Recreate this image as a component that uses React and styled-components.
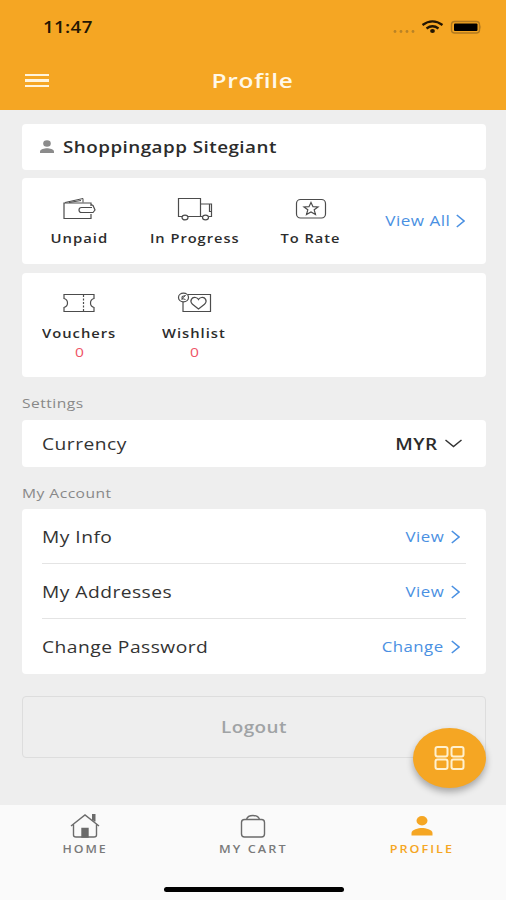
import React from 'react';
import styled, { createGlobalStyle } from 'styled-components';

const ORANGE = '#f5a623';

const GlobalStyle = createGlobalStyle`
  * { box-sizing: border-box; }
  body { margin: 0; background: #eeeeee; font-family: "Open Sans", "Noto Sans", sans-serif; }
  button { font: inherit; border: 0; background: none; padding: 0; margin: 0; }
`;

const Screen = styled.div`
  width: 506px;
  height: 900px;
  display: flex;
  flex-direction: column;
  background: #eeeeee;
  overflow: hidden;
`;

const Label = styled.span`
  display: inline-block;
  white-space: nowrap;
  font-size: ${(p) => p.$size}px;
  line-height: ${(p) => p.$line || 20}px;
  font-weight: ${(p) => p.$weight || 400};
  color: ${(p) => p.$color || '#333'};
  letter-spacing: ${(p) => p.$spacing ?? 0.4}px;
  transform: scaleX(${(p) => p.$stretch || 1.2});
  transform-origin: ${(p) => p.$origin || 'left'} center;
`;

const Header = styled.header`
  height: 110px;
  flex: none;
  background: ${ORANGE};
`;

const StatusBar = styled.div`
  height: 53px;
  padding: 0 24px 0 43px;
  display: flex;
  align-items: center;
  justify-content: space-between;
`;

const StatusIcons = styled.svg`
  width: 92px;
  height: 16px;
  display: block;
`;

const TitleBar = styled.div`
  height: 55px;
  display: grid;
  grid-template-columns: 61px 1fr 61px;
  align-items: center;
  text-align: center;
`;

const MenuButton = styled.button`
  display: grid;
  gap: 3px;
  padding: 0 12px 0 25px;
`;

const MenuLine = styled.i`
  display: block;
  height: 2.5px;
  background: #fff4dc;
`;

const Content = styled.main`
  flex: 1;
  padding: 14px 20px 0 22px;
`;

const Card = styled.section`
  height: ${(p) => p.$height}px;
  margin-bottom: ${(p) => p.$gap || 0}px;
  background: #fff;
  border-radius: 4px;
  display: flex;
`;

const NameCard = styled(Card)`
  align-items: center;
  padding-left: 17px;
  gap: 8px;
`;

const ShortcutCard = styled(Card)`
  align-items: flex-start;
  padding-top: 17px;
`;

const Shortcut = styled.div`
  width: ${(p) => p.$width}px;
  display: flex;
  flex-direction: column;
  align-items: center;
`;

const ShortcutIcon = styled.svg`
  width: 36px;
  height: 28px;
  display: block;
  margin-bottom: 7px;
  fill: none;
  stroke: #4c4c4c;
  stroke-width: 1.2;
`;

const ViewAll = styled.div`
  flex: 1;
  align-self: center;
  display: flex;
  justify-content: flex-end;
  align-items: center;
  gap: 6px;
  padding-right: 21px;
  margin-top: -17px;
`;

const SectionTitle = styled.h2`
  margin: 0;
  height: ${(p) => p.$height}px;
  padding-top: 9px;
  display: flex;
  align-items: center;
  font-size: 13px;
`;

const Row = styled.div`
  flex: 1;
  display: flex;
  justify-content: space-between;
  align-items: center;
`;

const CurrencyCard = styled(Card)`
  padding: 0 24px 0 20px;
`;

const AccountCard = styled(Card)`
  flex-direction: column;
  padding: 0 20px;
`;

const AccountRow = styled(Row)`
  flex: none;
  height: 55px;
  padding: 1px 6px 0 0;
  border-bottom: ${(p) => (p.$last ? '0' : '1px solid #e4e4e4')};
`;

const Action = styled.div`
  display: flex;
  align-items: center;
  gap: 7px;
`;

const LogoutButton = styled.button`
  width: 464px;
  height: 62px;
  border: 1.5px solid #dddddd;
  border-radius: 4px;
  display: flex;
  justify-content: center;
  align-items: center;
`;

const Fab = styled.button`
  position: absolute;
  left: 413px;
  top: 728px;
  width: 73px;
  height: 60px;
  border-radius: 50%;
  background: ${ORANGE};
  box-shadow: 0 4px 7px rgba(0, 0, 0, 0.3);
  display: flex;
  align-items: center;
  justify-content: center;
`;

const Footer = styled.footer`
  height: 95px;
  flex: none;
  background: #fafafa;
  display: flex;
  flex-direction: column;
  align-items: center;
`;

const Tabs = styled.nav`
  width: 100%;
  height: 82px;
  display: grid;
  grid-template-columns: repeat(3, 1fr);
  padding-left: 1px;
`;

const Tab = styled.div`
  display: flex;
  flex-direction: column;
  align-items: center;
  padding-top: 7px;
`;

const TabIcon = styled.svg`
  width: 32px;
  height: 28px;
  display: block;
  margin-bottom: 1px;
  fill: none;
  stroke: #6b6b6b;
  stroke-width: 1.4;
`;

const HomeIndicator = styled.div`
  width: 180px;
  height: 5px;
  margin-left: 2px;
  border-radius: 3px;
  background: #000;
`;

const Chevron = () => (
  <svg width="9" height="14" viewBox="0 0 9 14" fill="none" stroke="#4a90e2" strokeWidth="1.6">
    <path d="M.8 1 8 7 .8 13" />
  </svg>
);

const shapes = {
  unpaid: (
    <>
      <path d="M30 11V8H3V23.500H30V19" />
      <path d="M4 7.500 22 3.500V7.500M8 7.500 20 5.500" strokeWidth="1" />
      <path d="M31 12.500H20.500a2.500 2.500 0 0 0 0 5H32l2-2.500-2-4.500-2-1" />
    </>
  ),
  progress: (
    <>
      <path d="M5 21.500H1.500V3.500H23.500V21.500H11M23.500 9H34.500V21.500H31.500M25.500 21.500H23.500M32.500 9v7.500H34.500" />
      <ellipse cx="8" cy="22.500" rx="3" ry="2.400" />
      <ellipse cx="28.500" cy="22.500" rx="3" ry="2.400" />
    </>
  ),
  rate: (
    <>
      <rect x="3.500" y="4.500" width="29" height="18.500" rx="4" />
      <path d="m18 7.500 2 4.200 5 .3-3.800 2.800 1.300 4.700L18 17l-4.500 2.500 1.300-4.700L11 12l5-.3z" />
    </>
  ),
  vouchers: (
    <>
      <path d="M3 4.500H33V8.500q-3.500 1-3.500 4.500t3.500 4.500V21.500H3V17.500q3.500-1 3.500-4.500T3 8.500z" />
      <path d="M22.500 5v16" strokeDasharray="2 1.500" />
    </>
  ),
  wishlist: (
    <>
      <path d="M12 4.500H34.500V21.500H7V12" />
      <ellipse cx="7.500" cy="7.500" rx="5" ry="4.300" />
      <path d="M6 10V6.500L9.500 5.500 6 8.500 9.500 9.500" strokeWidth="1" />
      <path d="M22.500 19 16.500 14.200c-3.500-3.200-.5-7.400 3-6.700q2 .4 3 2 1-1.600 3-2c3.500-.7 6.500 3.500 3 6.700z" />
    </>
  ),
};

const ShortcutItem = ({ icon, label, width, count, stretch = 1.2 }) => (
  <Shortcut $width={width}>
    <ShortcutIcon viewBox="0 0 36 28">{shapes[icon]}</ShortcutIcon>
    <Label $size={12} $weight={600} $line={18} $origin="center" $spacing={0.8} $stretch={stretch} $color="#2c2c2c">
      {label}
    </Label>
    {count !== undefined && (
      <Label $size={12} $line={20} $origin="center" $spacing={0} $stretch={1.3} $color="#ee5366">
        {count}
      </Label>
    )}
  </Shortcut>
);

const accountRows = [
  { name: 'My Info', action: 'View' },
  { name: 'My Addresses', action: 'View' },
  { name: 'Change Password', action: 'Change' },
];

export default function App() {
  return (
    <Screen>
      <GlobalStyle />
      <Header>
        <StatusBar>
          <Label $size={16} $weight={600} $color="#231603" $spacing={0.3} $stretch={1.17}>11:47</Label>
          <StatusIcons viewBox="0 0 92 16">
            <g fill="#b98326">
              <circle cx="5" cy="12.500" r="1.400" />
              <circle cx="11" cy="12.500" r="1.400" />
              <circle cx="17" cy="12.500" r="1.400" />
              <circle cx="23" cy="12.500" r="1.400" />
            </g>
            <g fill="none" stroke="#231603" strokeWidth="2.300">
              <path d="M32.500 6Q42.500-1.200 52.500 6" />
              <path d="M36.500 9.500Q42.500 5.100 48.500 9.500" />
            </g>
            <ellipse cx="42.500" cy="12" rx="2.400" ry="1.900" fill="#231603" />
            <rect x="61.500" y="2.500" width="28" height="11.500" rx="3.200" fill="none" stroke="#b17a20" strokeWidth="1.400" />
            <rect x="64" y="4.500" width="23.500" height="7.500" rx="1" fill="#000" />
            <path d="M90.500 6q1.500 2.300 0 4.600z" fill="#b17a20" />
          </StatusIcons>
        </StatusBar>
        <TitleBar>
          <MenuButton aria-label="Menu">
            <MenuLine />
            <MenuLine />
            <MenuLine />
          </MenuButton>
          <div>
            <Label $size={20} $line={26} $weight={600} $color="#fff8e8" $origin="center" $spacing={0.6} $stretch={1.22}>Profile</Label>
          </div>
        </TitleBar>
      </Header>

      <Content>
        <NameCard $height={46} $gap={8}>
          <svg width="16" height="14" viewBox="0 0 16 14" fill="#8b8b8b">
            <ellipse cx="8" cy="3.500" rx="3.800" ry="3.200" />
            <path d="M1 13V11.500C1 9.500 5.500 8.300 8 8.300s7 1.200 7 3.200V13z" />
          </svg>
          <Label $size={16} $weight={600} $color="#2c2c2c" $stretch={1.176}>Shoppingapp Sitegiant</Label>
        </NameCard>

        <ShortcutCard $height={86} $gap={9}>
          <ShortcutItem icon="unpaid" label="Unpaid" width={114} stretch={1.24} />
          <ShortcutItem icon="progress" label="In Progress" width={118} stretch={1.22} />
          <ShortcutItem icon="rate" label="To Rate" width={114} stretch={1.22} />
          <ViewAll>
            <Label $size={14} $color="#4a90e2" $origin="right" $stretch={1.22}>View All</Label>
            <Chevron />
          </ViewAll>
        </ShortcutCard>

        <ShortcutCard $height={104}>
          <ShortcutItem icon="vouchers" label="Vouchers" width={114} stretch={1.23} count={0} />
          <ShortcutItem icon="wishlist" label="Wishlist" width={116} stretch={1.23} count={0} />
        </ShortcutCard>

        <SectionTitle $height={43}>
          <Label $size={13} $color="#888">Settings</Label>
        </SectionTitle>

        <CurrencyCard $height={47}>
          <Row>
            <Label $size={16}>Currency</Label>
            <Action>
              <Label $size={16} $weight={600} $origin="right" $color="#2c2c2c" $stretch={1.19}>MYR</Label>
              <svg width="17" height="9" viewBox="0 0 17 9" fill="none" stroke="#333" strokeWidth="1.500">
                <path d="M.5 1 8.500 7.500 16.500 1" />
              </svg>
            </Action>
          </Row>
        </CurrencyCard>

        <SectionTitle $height={42}>
          <Label $size={13} $color="#888">My Account</Label>
        </SectionTitle>

        <AccountCard $height={165} $gap={22}>
          {accountRows.map((row, i) => (
            <AccountRow key={row.name} $last={i === accountRows.length - 1}>
              <Label $size={16}>{row.name}</Label>
              <Action>
                <Label $size={14} $color="#4a90e2" $origin="right">{row.action}</Label>
                <Chevron />
              </Action>
            </AccountRow>
          ))}
        </AccountCard>

        <LogoutButton>
          <Label $size={16} $weight={600} $color="#a0a3a5" $origin="center" $stretch={1.18}>Logout</Label>
        </LogoutButton>
      </Content>

      <Fab aria-label="Shortcuts">
        <svg width="32" height="26" viewBox="0 0 32 26" fill="none" stroke="#fff1cf" strokeWidth="2">
          <rect x="1.500" y="2" width="12" height="9.500" rx="2" />
          <rect x="17.500" y="2" width="12" height="9.500" rx="2" />
          <rect x="1.500" y="14.500" width="12" height="9.500" rx="2" />
          <rect x="17.500" y="14.500" width="12" height="9.500" rx="2" />
        </svg>
      </Fab>

      <Footer>
        <Tabs>
          <Tab>
            <TabIcon viewBox="0 0 32 28">
              <path d="M2 14 16 3 30 14M4.500 12.500V23q0 2 2.500 2h18q2.500 0 2.500-2V12.500" />
              <path d="M24 8.500V3h1.500v6.500" strokeWidth="2" />
              <path d="M13 16.500h6v8.500h-6z" fill="#6b6b6b" />
            </TabIcon>
            <Label $size={10.5} $line={17} $weight={600} $color="#7a7a7a" $origin="center" $spacing={1.6} $stretch={1.18}>HOME</Label>
          </Tab>
          <Tab>
            <TabIcon viewBox="0 0 32 28">
              <rect x="4.500" y="7.500" width="23" height="17.500" rx="3" />
              <path d="M9.500 7.500c1.500-5.300 11.500-5.300 13 0" />
            </TabIcon>
            <Label $size={10.5} $line={17} $weight={600} $color="#7a7a7a" $origin="center" $spacing={1.7} $stretch={1.21}>MY CART</Label>
          </Tab>
          <Tab>
            <TabIcon viewBox="0 0 32 28">
              <g fill={ORANGE} stroke="none">
                <ellipse cx="16" cy="8.800" rx="5.500" ry="4.700" />
                <path d="M5.500 23.500v-2.500c0-3.400 7-5 10.500-5s10.500 1.600 10.500 5v2.500z" />
              </g>
            </TabIcon>
            <Label $size={10.5} $line={17} $weight={600} $color={ORANGE} $origin="center" $spacing={1.7} $stretch={1.2}>PROFILE</Label>
          </Tab>
        </Tabs>
        <HomeIndicator />
      </Footer>
    </Screen>
  );
}
